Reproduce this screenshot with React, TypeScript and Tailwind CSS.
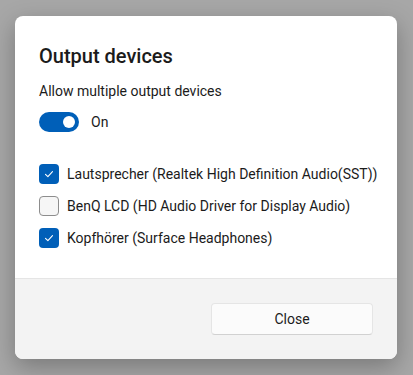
import { useState } from "react";

const devices = [
  { name: "Lautsprecher (Realtek High Definition Audio(SST))", checked: true },
  { name: "BenQ LCD (HD Audio Driver for Display Audio)", checked: false },
  { name: "Kopfhörer (Surface Headphones)", checked: true },
];

function CheckIcon() {
  return (
    <svg width="12" height="12" viewBox="0 0 12 12" fill="none">
      <path
        d="M2.5 6.3 L4.9 8.6 L9.5 3.6"
        stroke="white"
        strokeWidth="1.1"
        strokeLinecap="round"
        strokeLinejoin="round"
      />
    </svg>
  );
}

export default function App() {
  const [enabled, setEnabled] = useState(true);
  const [checked, setChecked] = useState(devices.map((d) => d.checked));

  return (
    <div
      className="w-[413px] h-[375px] bg-[#a7a7a7] pt-4 px-[15px]"
      style={{ fontFamily: "'Segoe UI', Roboto, sans-serif" }}
    >
      <div className="w-[382px] h-[343px] bg-white rounded-lg shadow-[0_8px_24px_rgba(0,0,0,0.28)] flex flex-col overflow-hidden">
        {/* Body */}
        <div className="flex-1 px-6 pt-[26px]">
          <h1 className="text-[20px] leading-7 font-medium text-[#1b1b1b]">
            Output devices
          </h1>
          <p className="mt-[11px] text-[14px] leading-5 text-[#1b1b1b]">
            Allow multiple output devices
          </p>

          {/* Toggle */}
          <div className="flex items-center gap-3 mt-[11px]">
            <button
              type="button"
              onClick={() => setEnabled(!enabled)}
              className={`w-10 h-5 rounded-full flex items-center px-1 ${
                enabled ? "bg-[#005fb8] justify-end" : "bg-white border border-[#8a8a8a] justify-start"
              }`}
            >
              <span
                className={`rounded-full ${enabled ? "w-3 h-3 bg-white" : "w-3 h-3 bg-[#5d5d5d]"}`}
              />
            </button>
            <span className="text-[14px] leading-5 text-[#1b1b1b]">
              {enabled ? "On" : "Off"}
            </span>
          </div>

          {/* Device list */}
          <div className="flex flex-col gap-3 mt-8">
            {devices.map((d, i) => (
              <label key={d.name} className="flex items-center gap-2 cursor-pointer">
                <button
                  type="button"
                  onClick={() =>
                    setChecked((prev) => prev.map((c, j) => (j === i ? !c : c)))
                  }
                  className={`w-5 h-5 shrink-0 rounded-[4px] flex items-center justify-center ${
                    checked[i]
                      ? "bg-[#005fb8]"
                      : "bg-[#f6f6f6] border border-[#8d8d8d]"
                  }`}
                >
                  {checked[i] && <CheckIcon />}
                </button>
                <span className="text-[14px] leading-5 text-[#1b1b1b] whitespace-nowrap">
                  {d.name}
                </span>
              </label>
            ))}
          </div>
        </div>

        {/* Footer */}
        <div className="h-[81px] bg-[#f3f3f3] border-t border-[#e5e5e5] flex justify-end items-start pt-6 pr-6">
          <button
            type="button"
            className="w-[162px] h-8 rounded-[4px] bg-[#fbfbfb] border border-[#e5e5e5] border-b-[#d1d1d1] text-[14px] text-[#1b1b1b]"
          >
            Close
          </button>
        </div>
      </div>
    </div>
  );
}
